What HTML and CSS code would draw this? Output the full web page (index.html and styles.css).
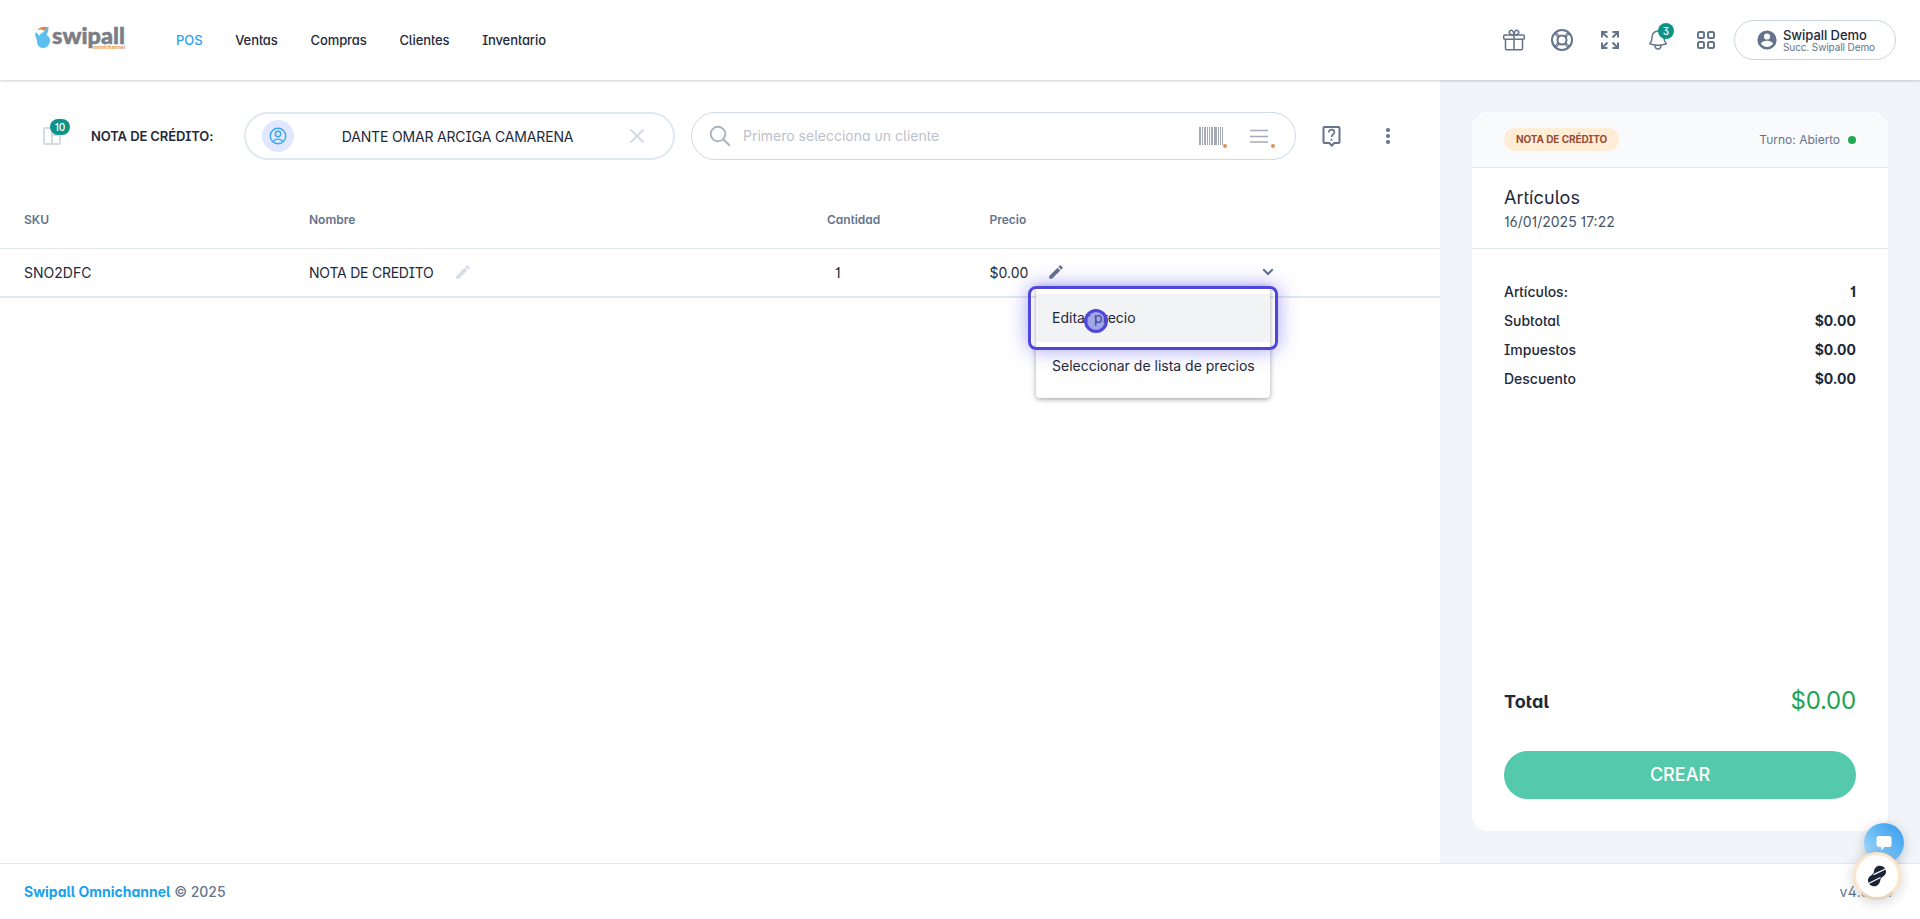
FILE: index.html
```html
<!DOCTYPE html>
<html lang="es">
  <head>
    <meta charset="utf-8">
    <title>Swipall - POS</title>
    <link rel="stylesheet" href="styles.css">
  </head>
  <body>
    <header class="header">
      <svg class="logo" width="92" height="40" viewBox="0 -4 92 40">
        <path d="M3 6 Q8 1 15 3.5 L11 7 Q8 4.500 3 6Z" fill="#d98b45"/>
        <path d="M1.500 8.500 Q4 8.500 5 12 Q6 10 8 9 L10.500 7 Q12 3 14.500 4 Q15 7 12.500 11 Q16.500 13 16 18 Q14 24 9 24 Q3 24 3 17 Q2 13 1 11Z" fill="#5bbff0"/>
        <text class="logo_name" x="18" y="20" textLength="73" lengthAdjust="spacingAndGlyphs">swipall</text>
        <text class="logo_sub" x="59" y="25" textLength="32" lengthAdjust="spacingAndGlyphs">omnichannel</text>
      </svg>
      <nav class="nav">
        <a class="active">POS</a>
        <a>Ventas</a>
        <a>Compras</a>
        <a>Clientes</a>
        <a>Inventario</a>
      </nav>
      <div class="actions">
        <span class="action">
          <svg width="24" height="24" viewBox="0 0 24 24" fill="none" stroke="#64748b" stroke-width="1.500">
            <rect x="1.700" y="7" width="20.600" height="4.200" rx="1"/>
            <path d="M3.500 11.200V20.700a1 1 0 0 0 1 1h15a1 1 0 0 0 1-1V11.200M12 7v14.700M12 7c-3 0-4.800-.8-4.800-2.700S9.500 1.700 10.700 3C11.600 4 12 5.500 12 7c0-1.500.4-3 1.300-4 1.200-1.300 3.500-.6 3.500 1.300S15 7 12 7z"/>
          </svg>
        </span>
        <span class="action">
          <svg width="24" height="24" viewBox="0 0 24 24" fill="none" stroke="#64748b" stroke-width="2">
            <circle cx="12" cy="12" r="10"/>
            <circle cx="12" cy="12" r="4.500"/>
            <path d="M4.600 5.600l4 4M5.800 4.500l3.800 3.900M18.200 4.500l-3.800 3.900M19.400 5.600l-4 4M4.600 18.400l4-4M5.800 19.500l3.800-3.900M18.200 19.500l-3.800-3.900M19.400 18.400l-4-4" stroke-width="1.200"/>
          </svg>
        </span>
        <span class="action">
          <svg width="24" height="24" viewBox="0 0 24 24" fill="none" stroke="#64748b" stroke-width="2">
            <path d="M4 9.500V4h5.500M4 4l5.500 5.500M14.500 4H20v5.500M20 4l-5.500 5.500M4 14.500V20h5.500M4 20l5.500-5.500M14.500 20H20v-5.500M20 20l-5.500-5.500"/>
          </svg>
        </span>
        <span class="action">
          <svg width="24" height="24" viewBox="0 0 24 24" fill="none" stroke="#64748b" stroke-width="1.500" stroke-linejoin="round">
            <path d="M14.857 17.082a23.848 23.848 0 0 0 5.454-1.310A8.967 8.967 0 0 1 18 9.750V9A6 6 0 0 0 6 9v.75a8.967 8.967 0 0 1-2.312 6.022c1.733.64 3.560 1.085 5.455 1.310m5.714 0a24.255 24.255 0 0 1-5.714 0m5.714 0a3 3 0 1 1-5.714 0"/>
          </svg>
          <span class="badge">3</span>
        </span>
        <span class="action">
          <svg width="24" height="24" viewBox="0 0 24 24" fill="none" stroke="#64748b" stroke-width="2">
            <rect x="4" y="4" width="6" height="6" rx="1.500"/>
            <rect x="14" y="4" width="6" height="6" rx="1.500"/>
            <rect x="4" y="14" width="6" height="6" rx="1.500"/>
            <rect x="14" y="14" width="6" height="6" rx="1.500"/>
          </svg>
        </span>
      </div>
      <button class="user">
        <svg width="24" height="24" viewBox="0 0 24 24" fill="#64748b">
          <path d="M12 2.400a9.600 9.600 0 1 0 0 19.200 9.600 9.600 0 0 0 0-19.200zm0 3a3.100 3.100 0 1 1 0 6.200 3.100 3.100 0 0 1 0-6.200zm0 13.600c-2.500 0-4.700-1.300-6-3.200.1-2 4-3 6-3s5.900 1 6 3c-1.300 1.900-3.500 3.200-6 3.200z"/>
        </svg>
        <span class="user_text">
          <span class="user_name">Swipall Demo</span>
          <span class="user_branch">Succ. Swipall Demo</span>
        </span>
      </button>
    </header>

    <main class="main">
      <section class="sale">
        <div class="toolbar">
          <div class="box">
            <svg width="18" height="18" viewBox="0 0 18 18" fill="none" stroke="#d5dae1" stroke-width="2">
              <path d="M9 1H2a1 1 0 0 0-1 1v14a1 1 0 0 0 1 1h14a1 1 0 0 0 1-1V8M9 1v16M9 8h8"/>
            </svg>
            <span class="badge badge_wide">10</span>
          </div>
          <div class="doc_type">NOTA DE CRÉDITO:</div>
          <div class="customer">
            <span class="avatar">
              <svg width="18" height="18" viewBox="0 0 18 18" fill="none" stroke="#38a9ee" stroke-width="1.400">
                <circle cx="9" cy="9" r="7.700"/>
                <circle cx="9" cy="7" r="2.700"/>
                <path d="M4 14.600c1.200-1.800 2.900-2.500 5-2.500s3.800.7 5 2.500"/>
              </svg>
            </span>
            <span class="customer_name">DANTE OMAR ARCIGA CAMARENA</span>
            <svg width="24" height="24" viewBox="0 0 24 24" fill="none" stroke="#d5dae1" stroke-width="2">
              <path d="M5.500 5.500l13 13M18.500 5.500l-13 13"/>
            </svg>
          </div>
          <div class="search">
            <svg width="24" height="24" viewBox="0 0 24 24" fill="none" stroke="#adb4c0" stroke-width="2">
              <circle cx="10" cy="10" r="7.300"/>
              <path d="M15.200 15.200l6.600 6.600"/>
            </svg>
            <span class="placeholder">Primero selecciona un cliente</span>
            <span class="tool">
              <svg width="24" height="18" viewBox="0 0 24 18" fill="#a3a9b5">
                <path d="M0 0h2v18H0zM3 0h1v18H3zM5 0h2v18H5zM8 0h1v18h-1zM10 0h1v18h-1zM12 0h2v18h-2zM15 0h3v18h-3zM19 0h1v18h-1zM21 0h1v18h-1zM23 0h1v18h-1z"/>
              </svg>
              <i class="dot"></i>
            </span>
            <span class="tool">
              <svg width="18" height="18" viewBox="0 0 18 18" stroke="#a3aab8" stroke-width="1.600">
                <path d="M0 3.500h18M0 9.500h18M0 15h18"/>
              </svg>
              <i class="dot dot_far"></i>
            </span>
          </div>
          <svg class="help" width="24" height="24" viewBox="0 0 24 24" fill="none" stroke="#64748b" stroke-width="2">
            <path d="M4.500 3h14a1 1 0 0 1 1 1v14a1 1 0 0 1-1 1h-4.200l-2.500 2.500L9.300 19H4.500a1 1 0 0 1-1-1V4a1 1 0 0 1 1-1z"/>
            <path d="M8.600 8.400c0-1.700 1.300-2.700 2.900-2.700s2.900 1 2.900 2.600c0 2-2.900 2.300-2.900 4.700M11.500 14.700v2" stroke-width="1.700"/>
          </svg>
          <svg class="more" width="24" height="24" viewBox="0 0 24 24" fill="#64748b">
            <circle cx="12" cy="6" r="2.100"/>
            <circle cx="12" cy="12" r="2.100"/>
            <circle cx="12" cy="18" r="2.100"/>
          </svg>
        </div>

        <div class="row row_head">
          <span>SKU</span>
          <span>Nombre</span>
          <span>Cantidad</span>
          <span>Precio</span>
        </div>
        <div class="row row_item">
          <span>SNO2DFC</span>
          <div class="cell">
            <span class="item_name">NOTA DE CREDITO</span>
            <svg class="pencil pencil_off" width="18" height="18" viewBox="0 0 24 24"><path d="M3 17.250V21h3.750L17.810 9.940l-3.750-3.750L3 17.250zM20.710 7.040a1 1 0 0 0 0-1.410l-2.340-2.340a1 1 0 0 0-1.410 0l-1.830 1.830 3.750 3.750 1.830-1.830z"/></svg>
          </div>
          <span class="qty">1</span>
          <div class="cell price">$0.00
            <svg class="pencil" width="18" height="18" viewBox="0 0 24 24"><path d="M3 17.250V21h3.750L17.810 9.940l-3.750-3.750L3 17.250zM20.710 7.040a1 1 0 0 0 0-1.410l-2.340-2.340a1 1 0 0 0-1.410 0l-1.830 1.830 3.750 3.750 1.830-1.830z"/></svg>
            <div class="menu">
              <div class="menu_item hover">Editar precio</div>
              <div class="menu_item">Seleccionar de lista de precios</div>
            </div>
            <div class="highlight"></div>
            <div class="pointer"></div>
          </div>
          <svg class="chevron" width="12" height="8" viewBox="0 0 12 8" fill="none" stroke="#64748b" stroke-width="2">
            <path d="M1.200 1.200L6 6l4.800-4.800"/>
          </svg>
        </div>
      </section>

      <aside class="side">
        <div class="card">
          <div class="card_top">
            <span class="tag">NOTA DE CRÉDITO</span>
            <span class="shift">Turno: Abierto<i class="status"></i></span>
          </div>
          <div class="card_title">
            <div class="title">Artículos</div>
            <div class="date">16/01/2025 17:22</div>
          </div>
          <div class="totals">
            <div class="line"><span>Artículos:</span><b>1</b></div>
            <div class="line"><span>Subtotal</span><b>$0.00</b></div>
            <div class="line"><span>Impuestos</span><b>$0.00</b></div>
            <div class="line"><span>Descuento</span><b>$0.00</b></div>
          </div>
          <div class="total">
            <span class="total_label">Total</span>
            <span class="total_value">$0.00</span>
          </div>
          <button class="create">CREAR</button>
        </div>
      </aside>
    </main>

    <footer class="footer">
      <span><a>Swipall Omnichannel</a> © 2025</span>
      <span class="version">v4.8.127</span>
    </footer>

    <div class="chat">
      <svg width="16" height="15" viewBox="0 0 16 15" fill="#fff">
        <path d="M3 0h10a2.500 2.500 0 0 1 2.500 2.500v6A2.500 2.500 0 0 1 13 11H8.500L5.500 14.500 5 11H3A2.500 2.500 0 0 1 .5 8.500v-6A2.500 2.500 0 0 1 3 0z"/>
      </svg>
    </div>
    <div class="guide">
      <svg width="20" height="22" viewBox="0 0 20 22">
        <path d="M6.800 7.500C7 3 9.500.7 12.700.7c3.700 0 6.300 2.800 6.300 6 0 4-3.600 4.300-5.400 7.300-.6 4.500-2.900 7.300-6.400 7.300-3.600 0-6.200-2.700-6.200-6 0-4.200 4.300-4.800 5.800-7.800z" fill="#1c2438"/>
        <path d="M6.500 9.700L18.500 4M1.500 18.500L13.500 12.500" stroke="#fff" stroke-width="1.300"/>
      </svg>
    </div>
  </body>
</html>
```
FILE: styles.css
```css
* { box-sizing: border-box; }

body {
  margin: 0;
  height: 919px;
  display: flex;
  flex-direction: column;
  overflow: hidden;
  background: #fff;
  color: #1e293b;
  font-family: Inter, "Liberation Sans", sans-serif;
  font-size: 14px;
  line-height: 20px;
  font-feature-settings: "salt", "cv11";
}

svg { display: block; flex: none; }

button { font-family: inherit; border: none; padding: 0; }

.header {
  position: relative;
  z-index: 2;
  flex: none;
  height: 80px;
  display: flex;
  align-items: center;
  padding: 0 24px 0 34px;
  background: #fff;
  box-shadow: 0 1px 3px rgba(0, 0, 0, 0.12), 0 1px 2px rgba(0, 0, 0, 0.08);
}

.logo { overflow: visible; }
.logo_name {
  font-family: Lato, sans-serif;
  font-size: 23px;
  font-weight: 900;
  fill: #7b7e86;
  stroke: #7b7e86;
  stroke-width: 0.5px;
}
.logo_sub { font-family: Lato, sans-serif; font-size: 6px; font-weight: 900; fill: #e39a4e; }

.nav {
  display: flex;
  gap: 32.7px;
  margin-left: 50px;
  padding-bottom: 1px;
  font-size: 13px;
  font-weight: 500;
  letter-spacing: -0.08px;
}
.nav .active { color: #2aa3ec; }

.actions { display: flex; gap: 24px; margin-left: auto; }
.action { position: relative; }

.badge {
  position: absolute;
  top: -5px;
  left: 12px;
  width: 16px;
  height: 16px;
  border-radius: 8px;
  background: #0d9488;
  color: #fff;
  font-size: 10px;
  font-weight: 500;
  line-height: 16px;
  text-align: center;
}
.badge_wide { top: -8px; left: 7px; width: 20px; }

.user {
  display: flex;
  align-items: center;
  gap: 4px;
  width: 162px;
  height: 40px;
  margin-left: 16px;
  padding-left: 20px;
  border: 1px solid #cbd5e1;
  border-radius: 20px;
  background: #fff;
  color: #1e293b;
  text-align: left;
}
.user_text { display: flex; flex-direction: column; }
.user_name { font-size: 13px; font-weight: 500; line-height: 14px; letter-spacing: -0.05px; }
.user_branch { font-size: 10px; line-height: 10px; letter-spacing: -0.1px; color: #64748b; }

.main { flex: 1; display: flex; min-height: 0; }
.sale { width: 1440px; }

.toolbar { display: flex; align-items: center; height: 112px; padding-left: 43px; }
.box { position: relative; }
.doc_type {
  width: 153px;
  margin-left: 30px;
  padding-bottom: 1px;
  font-size: 13px;
  font-weight: 600;
  letter-spacing: -0.1px;
}

.customer {
  display: flex;
  align-items: center;
  width: 431px;
  height: 48px;
  padding: 0 24px 0 16px;
  border: 2px solid #e2e8f0;
  border-radius: 24px;
}
.avatar {
  display: flex;
  align-items: center;
  justify-content: center;
  width: 32px;
  height: 32px;
  border-radius: 50%;
  background: #e0e7ff;
}
.customer_name { flex: 1; padding: 2px 4px 0 0; text-align: center; letter-spacing: -0.17px; }

.search {
  display: flex;
  align-items: center;
  width: 605px;
  height: 48px;
  margin-left: 16px;
  padding: 0 27px 0 16px;
  border: 1px solid #cfd8e6;
  border-radius: 24px;
}
.placeholder { flex: 1; margin-left: 11px; color: #bbc1cc; }
.tool { position: relative; }
.tool + .tool { margin-left: 27px; }
.dot {
  position: absolute;
  right: -4px;
  bottom: -3px;
  width: 4px;
  height: 4px;
  border-radius: 50%;
  background: #dc9452;
}
.dot_far { right: -7px; }
.help { margin-left: 24px; }
.more { margin-left: 32px; }

.row {
  display: grid;
  grid-template-columns: 285px 518px 162.5px 272.5px 12px;
  align-items: center;
  padding-left: 24px;
}
.row_head {
  height: 57px;
  border-bottom: 1px solid #e2e8f0;
  color: #64748b;
  font-size: 12px;
  font-weight: 600;
}
.row_item { height: 49px; border-bottom: 2px solid #e2e8f0; }
.cell { display: flex; align-items: center; }
.item_name { letter-spacing: -0.23px; }
.qty { padding-left: 8px; }
.price { position: relative; }
.pencil { margin: -2px 0 0 19px; fill: #64748b; }
.pencil_off { fill: #d8dde3; margin-left: 20px; }
.chevron { margin-top: -2px; }

.menu {
  position: absolute;
  top: 23px;
  left: 46.5px;
  width: 234px;
  padding: 8px 0;
  border-radius: 4px;
  background: #fff;
  box-shadow: 0 2px 4px -1px rgba(0, 0, 0, 0.2), 0 1px 6px rgba(0, 0, 0, 0.25);
  font-feature-settings: normal;
}
.menu_item { height: 48px; padding-left: 16px; line-height: 48px; white-space: nowrap; }
.menu_item.hover { background: #f2f3f5; }

.highlight {
  position: absolute;
  top: 23px;
  left: 38.5px;
  width: 250px;
  height: 64px;
  border: 3px solid #4f46dc;
  border-radius: 8px;
  box-shadow: 0 0 20px rgba(79, 70, 229, 0.5);
}
.pointer {
  position: absolute;
  top: 46px;
  left: 94.5px;
  width: 24px;
  height: 24px;
  border: 3px solid #4f46dc;
  border-radius: 50%;
  background: rgba(79, 90, 220, 0.5);
}

.side { width: 480px; padding: 32px; background: #f1f5f9; }
.card {
  display: flex;
  flex-direction: column;
  height: 719px;
  border-radius: 16px;
  background: #fff;
  overflow: hidden;
}
.card_top {
  display: flex;
  align-items: center;
  justify-content: space-between;
  height: 56px;
  padding: 0 32px;
  background: #f8fafc;
  border-bottom: 1px solid #e2e8f0;
}
.tag {
  height: 23px;
  padding: 0 12px;
  border-radius: 12px;
  background: #ffedd5;
  color: #9a4a33;
  font-size: 10px;
  font-weight: 700;
  line-height: 23px;
  letter-spacing: -0.08px;
}
.shift { display: flex; align-items: center; color: #64748b; font-size: 12px; }
.status { width: 8px; height: 8px; margin-left: 8px; border-radius: 50%; background: #1fab54; }

.card_title { height: 81px; padding: 18px 32px 0; border-bottom: 1px solid #e2e8f0; }
.title { font-size: 18px; line-height: 24px; letter-spacing: 0.1px; }
.date { margin-top: 2px; color: #475569; }

.totals { display: flex; flex-direction: column; gap: 9px; padding: 33px 32px 0; }
.line { display: flex; justify-content: space-between; font-weight: 500; }
.line b { font-weight: 700; }

.total { display: flex; align-items: center; justify-content: space-between; margin-top: auto; padding: 0 32px; }
.total_label { padding-top: 2px; font-size: 18px; font-weight: 700; letter-spacing: 0.1px; }
.total_value { color: #1fa351; font-size: 24px; line-height: 28px; letter-spacing: -0.2px; }

.create {
  flex: none;
  height: 48px;
  margin: 36px 32px 32px;
  padding-bottom: 2px;
  border-radius: 24px;
  background: #54c9ab;
  color: #fff;
  font-size: 18px;
  font-weight: 500;
}

.footer {
  flex: none;
  display: flex;
  align-items: center;
  justify-content: space-between;
  height: 56px;
  padding: 0 24px;
  border-top: 1px solid #e2e8f0;
  background: #fff;
  color: #64748b;
  font-weight: 500;
}
.footer a { color: #1ba1ea; font-weight: 700; }
.version { font-weight: 400; letter-spacing: 0.4px; }

.chat, .guide {
  position: absolute;
  display: flex;
  align-items: center;
  justify-content: center;
  border-radius: 50%;
}
.chat {
  right: 16px;
  bottom: 56px;
  width: 40px;
  height: 40px;
  background: linear-gradient(45deg, #b9e2fc, #62b7f5 55%, #3799e9);
  box-shadow: 0 2px 12px rgba(0, 0, 0, 0.2);
}
.guide {
  right: 19px;
  bottom: 19px;
  width: 48px;
  height: 48px;
  border: 3px solid #fbe6cc;
  border-bottom-color: #e8d5bd;
  background: #fff;
  box-shadow: 0 2px 14px rgba(0, 0, 0, 0.18);
}
```
